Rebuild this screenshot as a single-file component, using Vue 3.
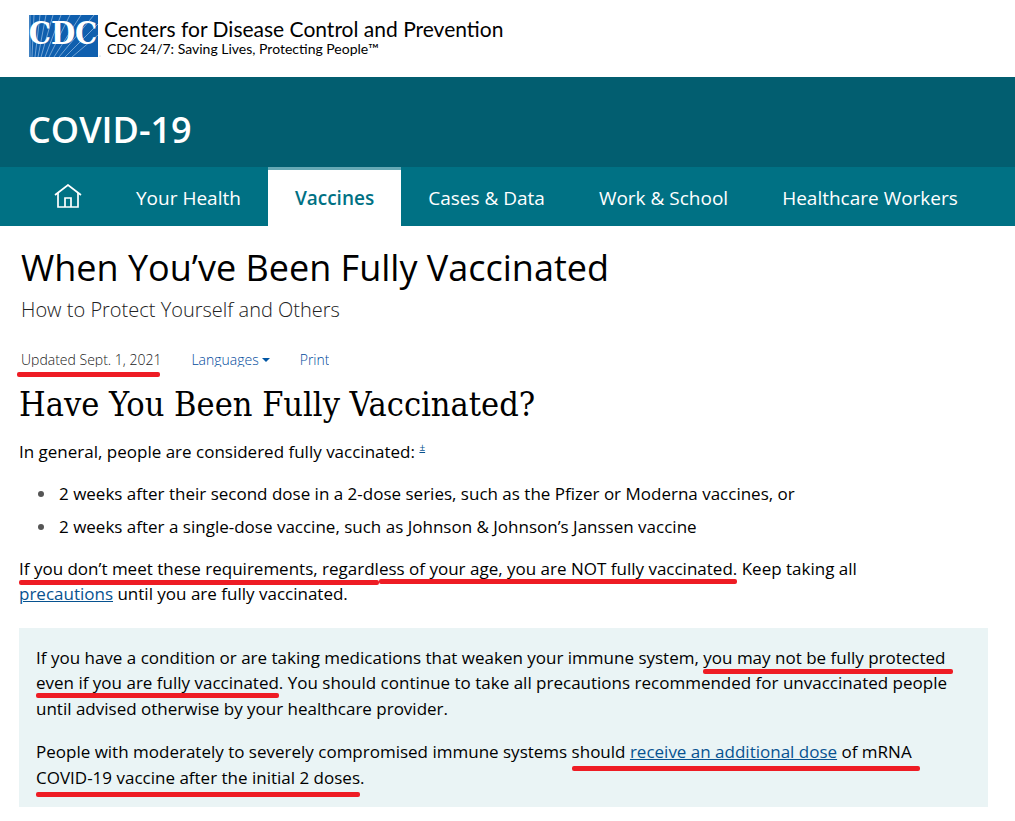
<script setup>
const navItems = [
  { label: 'Your Health', active: false },
  { label: 'Vaccines', active: true },
  { label: 'Cases & Data', active: false },
  { label: 'Work & School', active: false },
  { label: 'Healthcare Workers', active: false },
]
</script>

<template>
  <div class="page">
    <header class="agency">
      <a class="brand" href="#" aria-label="CDC home">
        <svg class="logo" viewBox="0 0 72 43" role="img" aria-label="CDC">
          <rect width="69" height="42" fill="#0f5fae" />
          <path d="M1 42 L1 0 M3 42 L5 0 M6 42 L11 0 M9 42 L17 0 M12 42 L24 0 M16 42 L32 0 M20 42 L41 0 M25 42 L52 0 M30 42 L65 0 M36 42 L69 9 M43 42 L69 20" stroke="#9fc3e6" stroke-width="0.7" fill="none" />
          <text x="34" y="29" text-anchor="middle" class="logo-text">CDC</text>
          <circle cx="71" cy="41" r="0.5" fill="#7ba7d6" />
        </svg>
        <span class="brand-text">
          <span class="agency-name">Centers for Disease Control and Prevention</span>
          <span class="agency-tag">CDC 24/7: Saving Lives, Protecting People™</span>
        </span>
      </a>
    </header>

    <div class="banner">COVID-19</div>

    <nav class="nav" aria-label="COVID-19">
      <a class="nav-item home" href="#" aria-label="Home">
        <svg viewBox="0 0 28 26" width="28" height="26" fill="none" stroke="#fff" stroke-width="1.7">
          <path d="M1 11 L14 1 L27 11" />
          <path d="M4 9 V23 H24 V9" />
          <path d="M11 23 V14 H17 V23" />
        </svg>
      </a>
      <a v-for="item in navItems" :key="item.label" href="#" class="nav-item" :class="{ active: item.active }">{{ item.label }}</a>
    </nav>

    <main class="content">
      <div class="title-block">
        <h1>When You’ve Been Fully Vaccinated</h1>
        <p class="subtitle">How to Protect Yourself and Others</p>
        <div class="meta">
          <span class="mark mark-date"><span class="clip">Updated Sept. 1, 2021</span></span>
          <button type="button" class="clip languages">Languages<i class="caret"></i></button>
          <a class="clip" href="#">Print</a>
        </div>
      </div>

      <h2>Have You Been Fully Vaccinated?</h2>
      <p>In general, people are considered fully vaccinated: <sup><a class="link" href="#">±</a></sup></p>
      <ul>
        <li>2 weeks after their second dose in a 2-dose series, such as the Pfizer or Moderna vaccines, or</li>
        <li>2 weeks after a single-dose vaccine, such as Johnson &amp; Johnson’s Janssen vaccine</li>
      </ul>
      <p class="requirement"><span class="mark mark-lower">If you don’t meet these requirements, regardl</span><span class="mark mark-low">ess of your age, you are NOT fully vaccinated.</span> Keep taking all <a class="link" href="#">precautions</a> until you are fully vaccinated.</p>

      <aside class="callout">
        <p>If you have a condition or are taking medications that weaken your immune system, <span class="mark mark-lower mark-wide">you may not be fully protected</span> <span class="mark mark-low">even if you are fully vaccinated</span>. You should continue to take all precautions recommended for unvaccinated people until advised otherwise by your healthcare provider.</p>
        <p>People with moderately to severely compromised immune systems <span class="mark mark-deep mark-wide">should <a class="link" href="#">receive an additional dose</a> of mRNA</span> <span class="mark mark-deep">COVID-19 vaccine after the initial 2 doses</span>.</p>
      </aside>
    </main>
  </div>
</template>

<style>
body {
  margin: 0;
  background: #fff;
}
</style>

<style scoped>
.page {
  font-family: "Open Sans", sans-serif;
  font-size: 17px;
  line-height: 1.5;
  color: #000;
}
a {
  color: #075290;
  text-decoration: none;
}
.agency {
  height: 77px;
  box-sizing: border-box;
  padding: 15px 28px 0;
}
.brand {
  display: flex;
  gap: 3px;
  color: #000;
}
.logo {
  width: 72px;
  height: 43px;
  margin-left: 1px;
  flex: none;
}
.logo-text {
  font-family: "DejaVu Serif Condensed", "DejaVu Serif", serif;
  font-weight: 700;
  font-size: 31px;
  fill: #fff;
}
.brand-text {
  display: flex;
  flex-direction: column;
  padding-top: 1px;
  font-family: Lato, sans-serif;
  white-space: nowrap;
}
.agency-name {
  font-size: 21px;
  line-height: 26px;
}
.agency-tag {
  padding-left: 3px;
  font-size: 14px;
  line-height: 14px;
}
.banner {
  height: 90px;
  box-sizing: border-box;
  padding: 27px 28px 0;
  background: #025e70;
  color: #fff;
  font-size: 36px;
  font-weight: 600;
  line-height: 52px;
}
.nav {
  display: flex;
  height: 59px;
  padding-left: 27px;
  background: #007184;
}
.nav-item {
  display: flex;
  align-items: center;
  box-sizing: border-box;
  padding: 3px 27px 0;
  color: #fff;
  font-size: 19px;
  white-space: nowrap;
}
.nav-item.home {
  padding-top: 0;
}
.nav-item.active {
  padding-top: 0;
  border-top: 3px solid #66a9b5;
  background: #fff;
  color: #007184;
  font-weight: 600;
}
.content {
  padding: 18px 27px 15px 19px;
}
.title-block {
  padding-left: 2px;
}
h1 {
  margin: 0;
  font-size: 36px;
  font-weight: 400;
  line-height: 48px;
}
.subtitle {
  margin: 3px 0 0;
  color: #222;
  font-size: 20px;
  font-weight: 300;
  line-height: 30px;
}
.meta {
  display: flex;
  gap: 30px;
  margin-top: 25px;
  height: 17px;
  color: #222;
  font-size: 14px;
  font-weight: 300;
  line-height: 20px;
}
.clip {
  display: block;
  height: 17px;
  overflow: hidden;
}
.meta a,
.languages {
  color: #004a9c;
}
.languages {
  display: flex;
  padding: 0;
  border: 0;
  background: none;
  font: inherit;
}
.caret {
  margin: 8px 0 0 3px;
  width: 0;
  height: 0;
  border: 4px solid transparent;
  border-top-color: #0056a4;
  border-bottom: 0;
}
h2 {
  margin: 13px 0 0;
  font-family: "DejaVu Serif Condensed", "DejaVu Serif", serif;
  font-size: 34px;
  font-weight: 400;
  line-height: 48px;
}
p {
  margin: 11px 0 16px;
}
sup {
  font-size: 10px;
  line-height: 0;
}
ul {
  margin: 0 0 16px;
  padding-left: 40px;
  list-style: none;
}
li {
  position: relative;
}
li + li {
  margin-top: 8px;
}
li::before {
  content: "";
  position: absolute;
  left: -21px;
  top: 10px;
  width: 6px;
  height: 6px;
  border-radius: 50%;
  background: #555;
}
.requirement {
  max-width: 860px;
  margin: 0;
}
.link {
  text-decoration: underline;
  text-decoration-thickness: 1px;
}
.mark {
  position: relative;
}
.mark::after {
  content: "";
  position: absolute;
  left: 0;
  right: 0;
  height: 5px;
  border-radius: 2px;
  background: #ee1c24;
}
.mark-low::after {
  bottom: -4px;
}
.mark-lower::after {
  bottom: -5px;
}
.mark-wide::after {
  right: -8px;
}
.mark-deep::after {
  bottom: -8px;
}
.mark-date::after {
  left: -4px;
  right: 1px;
  bottom: -10px;
}
.callout {
  margin-top: 21px;
  padding: 17px;
  background: #eaf4f5;
}
.callout p {
  margin: 0;
}
.callout p + p {
  margin-top: 18px;
}
</style>
